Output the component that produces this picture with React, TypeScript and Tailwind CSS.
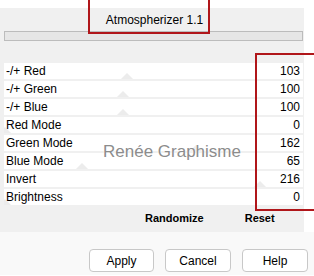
import React from 'react';

const ROWS = [
  { label: '-/+ Red', value: 103 },
  { label: '-/+ Green', value: 100 },
  { label: '-/+ Blue', value: 100 },
  { label: 'Red Mode', value: 0 },
  { label: 'Green Mode', value: 162 },
  { label: 'Blue Mode', value: 65 },
  { label: 'Invert', value: 216 },
  { label: 'Brightness', value: 0 },
];

const Thumb: React.FC<{ value: number }> = ({ value }) => (
  <svg
    className="absolute bottom-[-2px]"
    style={{ left: value * 1.18 - 7 }}
    width="16"
    height="8"
    viewBox="0 0 16 8"
  >
    <path d="M8 0 L16 8 L0 8 Z" fill="#ececec" />
  </svg>
);

export default function App() {
  return (
    <div className="relative w-[314px] h-[276px] overflow-hidden bg-white font-['Liberation_Sans',Arial,sans-serif] text-[11px] text-black">
      <div className="flex">
        {/* Main panel */}
        <div className="w-[304px] flex flex-col">
          <div className="h-[8px] bg-white" />
          <div className="bg-[#f0f0f0] flex flex-col pl-[4px] pr-[1px]">
            <div className="h-[23px] flex items-center justify-center text-[12px] pl-[2px]">Atmospherizer 1.1</div>
            <div className="h-[10px] bg-[#e6e6e6] border border-[#bcbcbc]" />
            <div className="h-[22px]" />
            <div className="flex flex-col gap-[2px]">
              {ROWS.map((r) => (
                <div key={r.label} className="relative h-[16px] bg-white flex items-center justify-between pl-[2px] pr-[3px] overflow-hidden">
                  <Thumb value={r.value} />
                  <span className="relative text-[12px]">{r.label}</span>
                  <span className="relative text-[12px]">{r.value}</span>
                </div>
              ))}
            </div>
            <div className="h-[27px] flex items-center font-bold text-[11px]">
              <span className="ml-[141px]">Randomize</span>
              <span className="ml-[41px]">Reset</span>
            </div>
          </div>
        </div>
        <div className="flex-1 bg-white" />
      </div>

      {/* Bottom buttons */}
      <div className="h-[43px] bg-[#f9f9f9] flex items-start pt-[17px] pl-[89px] gap-[11px] text-[12px]">
        <button className="w-[65px] h-[23px] bg-white border border-[#c8c8c8] rounded-[4px] flex items-center justify-center">Apply</button>
        <button className="w-[66px] h-[23px] bg-white border border-[#c8c8c8] rounded-[4px] flex items-center justify-center">Cancel</button>
        <button className="w-[66px] h-[23px] bg-white border border-[#c8c8c8] rounded-[4px] flex items-center justify-center">Help</button>
      </div>

      {/* Watermark */}
      <div className="absolute left-[103px] top-[139px] text-[17px] text-[#8c8c8c] [text-shadow:0_0_2px_#ffffff,0_0_1px_#ffffff] pointer-events-none">
        Renée Graphisme
      </div>

      {/* Red highlight boxes */}
      <div className="absolute left-[88px] top-[-3px] w-[122px] h-[37px] border-2 border-[#b0161a] pointer-events-none" />
      <div className="absolute left-[255px] top-[53px] w-[70px] h-[158px] border-2 border-[#b0161a] pointer-events-none" />
    </div>
  );
}
